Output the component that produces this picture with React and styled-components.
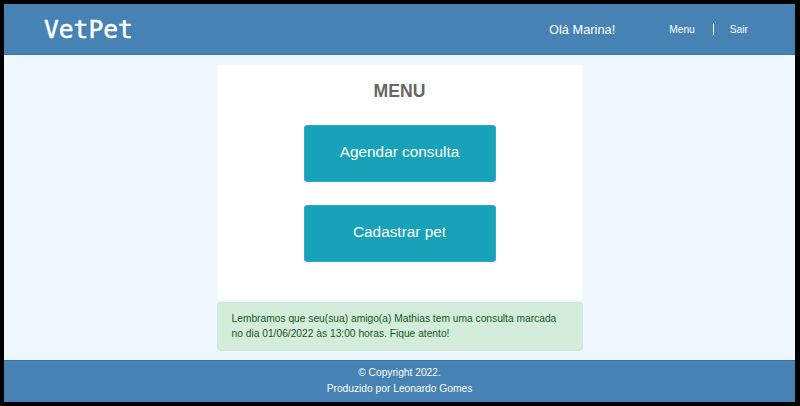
import React from "react";
import styled, { createGlobalStyle } from "styled-components";

const GlobalStyle = createGlobalStyle`
  html, body {
    margin: 0;
    padding: 0;
    background: #000;
  }
  body {
    font-family: "Liberation Sans", Arial, sans-serif;
  }
`;

const Frame = styled.div`
  padding: 4px 5px 4px 4px;
  width: 800px;
  height: 406px;
  box-sizing: border-box;
`;

const Page = styled.div`
  display: flex;
  flex-direction: column;
  height: 100%;
  background: #f0f8ff;
`;

const Header = styled.header`
  height: 50px;
  flex-shrink: 0;
  display: flex;
  align-items: center;
  justify-content: space-between;
  padding: 0 47px 0 40px;
  background: #4682b4;
  border-bottom: 1px solid #3c74a3;
  color: #fff;
`;

const Logo = styled.h1`
  margin: 0;
  font-family: "DejaVu Sans Mono", monospace;
  font-weight: normal;
  font-size: 24.6px;
  -webkit-text-stroke: 0.5px #fff;
`;

const Nav = styled.nav`
  display: flex;
  align-items: center;
`;

const Greeting = styled.span`
  font-size: 12.8px;
  margin-right: 54px;
`;

const NavLink = styled.a`
  color: #fff;
  font-size: 10.24px;
  text-decoration: none;
  cursor: pointer;
`;

const Divider = styled.span`
  width: 1px;
  height: 12px;
  background: #fff;
  margin: 0 16px 0 18px;
`;

const Main = styled.main`
  flex: 1;
  padding-top: 10px;
`;

const Card = styled.section`
  width: 366px;
  margin: 0 auto;
  background: #fff;
  border-radius: 3px;
  padding: 16px 0 38px;
  box-sizing: border-box;
  display: flex;
  flex-direction: column;
  align-items: center;
`;

const Title = styled.h2`
  margin: 0 0 24px;
  font-size: 17.6px;
  line-height: 20px;
  font-weight: bold;
  color: #666;
`;

const ActionButton = styled.button`
  width: 192px;
  height: 57px;
  margin-top: ${(p) => p.$gap || 0}px;
  padding: 0 0 4px;
  background: #17a2b8;
  border: 1px solid #2aabbf;
  border-radius: 3px;
  color: #fff;
  font-family: "Liberation Sans", Arial, sans-serif;
  font-size: 15.36px;
  cursor: pointer;
`;

const Alert = styled.div`
  width: 366px;
  margin: 2px auto 0;
  box-sizing: border-box;
  padding: 8px 20px 9px 14px;
  background: #d4edda;
  border: 1px solid #cde9d3;
  border-radius: 3px;
  color: #155724;
  font-size: 10.24px;
  line-height: 15px;
`;

const Footer = styled.footer`
  flex-shrink: 0;
  height: 42px;
  box-sizing: border-box;
  border-top: 1px solid #3c74a3;
  padding-top: 4px;
  background: #4682b4;
  color: #fff;
  text-align: center;
  font-size: 10.24px;
  line-height: 16px;
`;

const FooterLine = styled.p`
  margin: 0;
`;

export default function App() {
  return (
    <Frame>
      <GlobalStyle />
      <Page>
        <Header>
          <Logo>VetPet</Logo>
          <Nav>
            <Greeting>Olá Marina!</Greeting>
            <NavLink>Menu</NavLink>
            <Divider />
            <NavLink>Sair</NavLink>
          </Nav>
        </Header>
        <Main>
          <Card>
            <Title>MENU</Title>
            <ActionButton>Agendar consulta</ActionButton>
            <ActionButton $gap={23}>Cadastrar pet</ActionButton>
          </Card>
          <Alert>
            Lembramos que seu(sua) amigo(a) Mathias tem uma consulta marcada no dia
            01/06/2022 às 13:00 horas. Fique atento!
          </Alert>
        </Main>
        <Footer>
          <FooterLine>© Copyright 2022.</FooterLine>
          <FooterLine>Produzido por Leonardo Gomes</FooterLine>
        </Footer>
      </Page>
    </Frame>
  );
}
